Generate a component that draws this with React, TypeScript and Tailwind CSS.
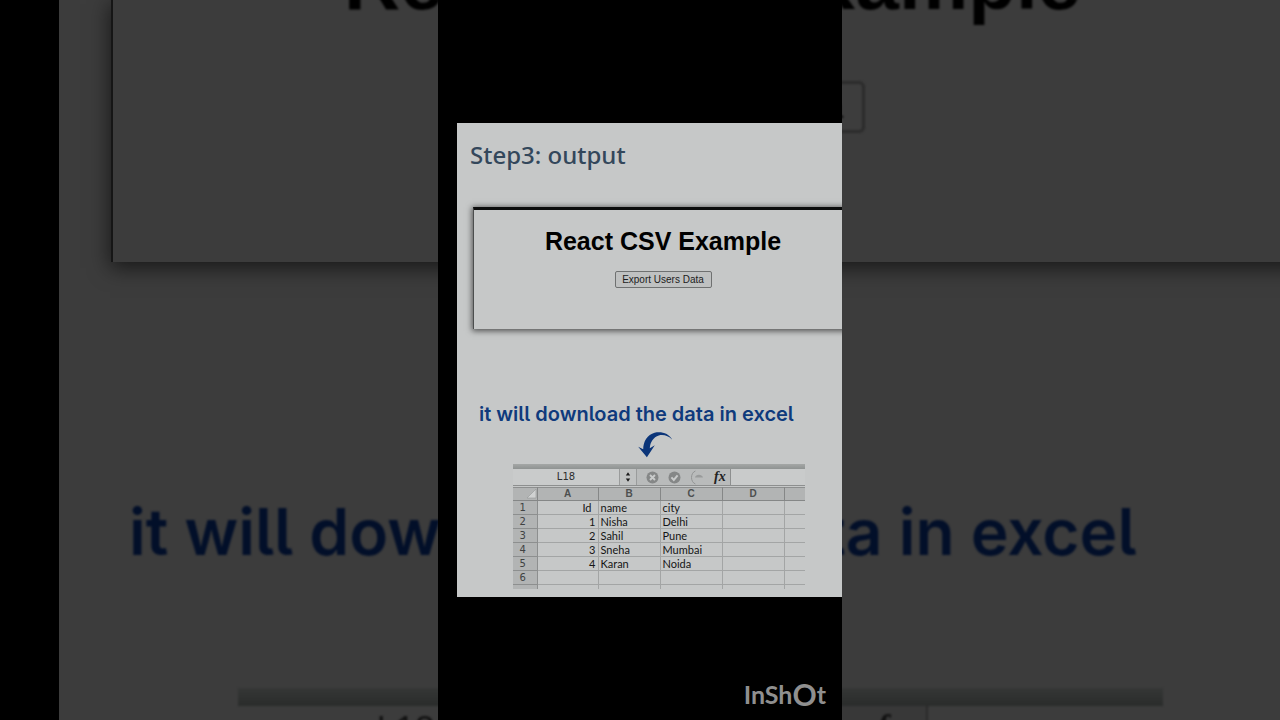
import React from "react";

const rows: [string, string, string][] = [
  ["Id", "name", "city"],
  ["1", "Nisha", "Delhi"],
  ["2", "Sahil", "Pune"],
  ["3", "Sneha", "Mumbai"],
  ["4", "Karan", "Noida"],
  ["", "", ""],
];

function Backdrop() {
  return (
    <div aria-hidden="true" className="absolute inset-0 flex overflow-hidden pl-[59px]">
      <div className="min-w-0 flex-1 overflow-hidden bg-[#3c3c3c]">
        <div className="-mr-8 ml-[52px] flex h-[262px] flex-col items-center border-l-2 border-[#161616] bg-[#3c3c3c] shadow-[0_5px_20px_1px_rgba(0,0,0,0.6)]">
          <p className="-mt-[62px] font-['Liberation_Sans',Arial,sans-serif] text-[78px] leading-[88px] font-bold whitespace-nowrap text-black blur-[1px]">
            React CSV Example
          </p>
          <button
            type="button"
            tabIndex={-1}
            className="mt-[55px] h-[52px] w-[304px] rounded-md border-[3px] border-[#2b2b2b] bg-[#3d3d3d] font-['Liberation_Sans',Arial,sans-serif] text-[32px] leading-10 whitespace-nowrap text-black blur-[1px]"
          >
            Export Users Data
          </button>
        </div>
        <p className="mt-[230px] ml-[70px] font-['Inter','Noto_Sans',sans-serif] text-[64px] leading-[80px] font-semibold whitespace-nowrap text-[#020f29] [font-feature-settings:'cv05'] blur-[1px]">
          it will download the data in excel
        </p>
        <div className="mt-[116px] ml-[179px] w-[925px] blur-[1px]">
          <div className="h-[18px] bg-linear-to-b from-[#353736] to-[#2a2c2b]" />
          <div className="flex h-[60px] text-[35px] leading-[44px] text-[#111111]">
            <span className="w-[335px] text-center font-['Noto_Sans',sans-serif]">L18</span>
            <span className="flex-1 border-r-2 border-[#2a2a2a] bg-[#383838] pr-5 text-right font-['Liberation_Serif',serif] font-bold italic">
              fx
            </span>
            <span className="w-[235px]" />
          </div>
        </div>
      </div>
    </div>
  );
}

function CurvedArrow() {
  return (
    <svg className="mt-1 ml-[181px] block h-[26px] w-[36px]" viewBox="0 0 36 26" fill="#0b3579" aria-hidden="true">
      <path d="M34.3 7.7C30.2 3.6 25.4 2.3 20.8 3.5C15.4 5.2 12.2 10 11.8 16.2L16.8 13.2L8.9 25.2L0.2 14.8L5.2 17.2C5.2 9.4 9.4 2.6 16.6 0.7C23.8 -0.8 31 1.6 34.3 7.7Z" />
    </svg>
  );
}

function FormulaBar() {
  return (
    <div className="flex h-[17px] border-b border-[#8d8f8f] bg-[#b9bbbb]">
      <input
        aria-label="Cell reference"
        defaultValue="L18"
        className="w-[106px] min-w-0 bg-[#c9cbcb] text-center font-['DejaVu_Sans',sans-serif] text-[10px] leading-4 text-[#2d2d2d] outline-none"
      />
      <button type="button" aria-label="Choose cell" className="flex w-[18px] items-center justify-center border-x border-[#9a9c9c] bg-[#c0c2c2]">
        <svg className="h-[12px] w-[6px]" viewBox="0 0 6 12" fill="#1b1b1b">
          <path d="M3 1.2L5.2 4.6H0.8ZM3 10.8L5.2 7.4H0.8Z" />
        </svg>
      </button>
      <div className="flex flex-1 items-center border-r border-[#8d8f8f] pl-[9px]">
        <button type="button" aria-label="Cancel">
          <svg className="block h-[13px] w-[13px]" viewBox="0 0 13 13">
            <circle cx="6.5" cy="6.5" r="6" fill="#858787" />
            <path d="M4 4L9 9M9 4L4 9" stroke="#c9cbcb" strokeWidth="1.9" />
          </svg>
        </button>
        <button type="button" aria-label="Accept" className="ml-[9px]">
          <svg className="block h-[13px] w-[13px]" viewBox="0 0 13 13">
            <circle cx="6.5" cy="6.5" r="6" fill="#858787" />
            <path d="M3.4 6.4L5.8 8.9L9.6 4.4" fill="none" stroke="#c9cbcb" strokeWidth="2" />
          </svg>
        </button>
        <svg className="ml-[9px] block h-[15px] w-[15px]" viewBox="0 0 15 15" aria-hidden="true">
          <path d="M5.4 1C0.2 3 0.2 12 5.4 14" fill="none" stroke="#929494" strokeWidth="1" />
          <path d="M5 7.6C5.5 3.8 12 3.8 13 7.6Z" fill="#999b9b" />
        </svg>
        <button
          type="button"
          aria-label="Insert function"
          className="ml-[9px] font-['Liberation_Serif',serif] text-[14px] leading-4 font-bold text-[#222222] italic"
        >
          fx
        </button>
      </div>
      <input aria-label="Formula" className="w-[74px] min-w-0 bg-[#c9cbcb] outline-none" />
    </div>
  );
}

function Sheet() {
  return (
    <div className="mr-[37px] ml-[56px] h-[125px] overflow-hidden">
      <div className="h-[5px] bg-linear-to-b from-[#a4a7a6] to-[#8f9392]" />
      <FormulaBar />
      <table className="mt-px w-full table-fixed border-collapse border-t border-[#8d8f8f] font-['Lato',sans-serif] text-[11px] leading-[13px] text-[#151515]">
        <colgroup>
          <col className="w-6" />
          <col className="w-[61px]" />
          <col className="w-[62px]" />
          <col className="w-[62px]" />
          <col className="w-[62px]" />
          <col />
        </colgroup>
        <thead>
          <tr className="h-[13px] bg-[#b2b4b4] font-['Liberation_Sans',Arial,sans-serif] text-[10px] leading-3 text-[#4d4f4f]">
            <th className="border-r border-b border-[#858787] p-0">
              <svg className="ml-auto block h-[10px] w-[10px]" viewBox="0 0 10 10" aria-hidden="true">
                <path d="M9 0V9H0Z" fill="#d0d2d2" stroke="#969898" strokeWidth="0.6" />
              </svg>
            </th>
            {["A", "B", "C", "D"].map((c) => (
              <th key={c} scope="col" className="border-r border-b border-[#858787] p-0 font-bold">
                {c}
              </th>
            ))}
            <th className="border-b border-[#858787] p-0" />
          </tr>
        </thead>
        <tbody>
          {rows.map(([id, name, city], i) => (
            <tr key={i} className="h-[14px]">
              <th
                scope="row"
                className="border-r border-b border-[#8d8f8f] bg-[#b2b4b4] p-0 pr-1 text-center font-['DejaVu_Sans',sans-serif] text-[10px] font-normal text-[#404242]"
              >
                {i + 1}
              </th>
              <td className={`border-r border-b border-[#a3a5a5] p-0 text-right ${i === 0 ? "pr-1.5" : "pr-0.5"}`}>{id}</td>
              <td className="border-r border-b border-[#a3a5a5] p-0 pl-0.5">{name}</td>
              <td className="border-r border-b border-[#a3a5a5] p-0 pl-0.5">{city}</td>
              <td className="border-r border-b border-[#a3a5a5] p-0" />
              <td className="border-b border-[#a3a5a5] p-0" />
            </tr>
          ))}
          <tr className="h-[14px]">
            <th className="border-r border-[#8d8f8f] bg-[#b2b4b4] p-0" />
            <td className="border-r border-[#a3a5a5] p-0" />
            <td className="border-r border-[#a3a5a5] p-0" />
            <td className="border-r border-[#a3a5a5] p-0" />
            <td className="border-r border-[#a3a5a5] p-0" />
            <td className="p-0" />
          </tr>
        </tbody>
      </table>
    </div>
  );
}

function Slide() {
  return (
    <section className="w-full overflow-hidden bg-[#c6c8c8] pb-2">
      <h2 className="mt-4 ml-[13px] font-['Noto_Sans',sans-serif] text-[24px] leading-8 font-medium text-[#33475b]">
        Step3: output
      </h2>
      <div className="mt-9 -mr-[10px] ml-4 flex h-[122px] flex-col items-center border-t-[3px] border-l border-t-[#0b0c0c] border-l-[#4c4e4e] bg-[#c6c8c8] font-['Liberation_Sans',Arial,sans-serif] shadow-[0_1px_6px_1px_rgba(0,0,0,0.6)]">
        <h1 className="mt-4 text-[25px] leading-[30px] font-bold text-black">React CSV Example</h1>
        <button
          type="button"
          className="mt-[15px] h-[17px] w-[97px] rounded-xs border border-[#6f7171] bg-[#bfc1c1] text-[10px] leading-[14px] whitespace-nowrap text-[#1c1c1c]"
        >
          Export Users Data
        </button>
      </div>
      <p className="mt-[71px] ml-[22px] font-['Inter','Noto_Sans',sans-serif] text-[20px] leading-7 font-semibold whitespace-nowrap text-[#0f3a7c] [font-feature-settings:'cv05']">
        it will download the data in excel
      </p>
      <CurvedArrow />
      <div className="mt-1.5">
        <Sheet />
      </div>
    </section>
  );
}

export default function App() {
  return (
    <main className="relative flex min-h-screen justify-center overflow-hidden bg-black">
      <Backdrop />
      <div className="relative flex w-[404px] items-center bg-black pl-[19px]">
        <Slide />
        <p className="absolute right-4 bottom-2.5 flex items-center font-['Lato',sans-serif] text-[25px] leading-8 font-bold text-[#8f8f8f]">
          InSh<span className="text-[30px]">O</span>t
        </p>
      </div>
    </main>
  );
}
